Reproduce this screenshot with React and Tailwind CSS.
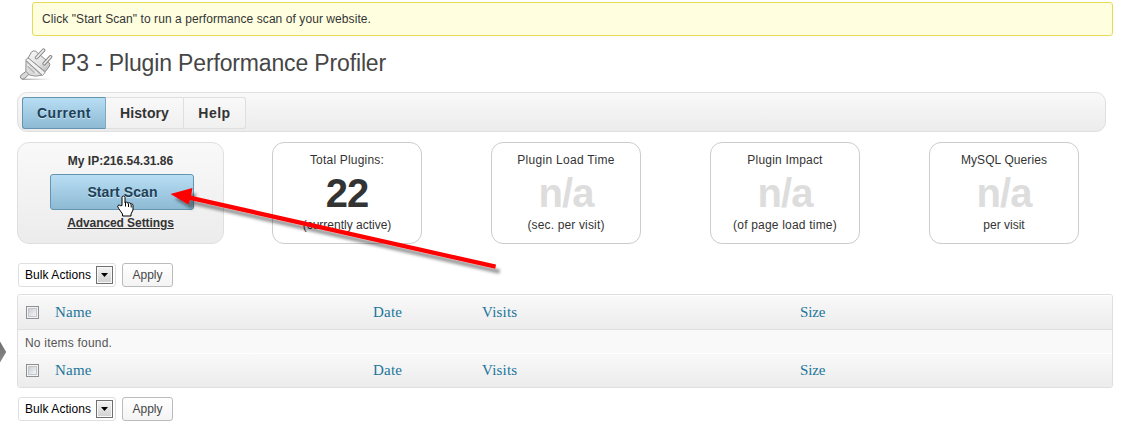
import React from "react";

function PlugIcon() {
  return (
    <svg width="34" height="34" viewBox="0 0 34 34" fill="none">
      <defs>
        <linearGradient id="metal" x1="8" y1="6" x2="24" y2="28" gradientUnits="userSpaceOnUse">
          <stop offset="0" stopColor="#f6f6f6" />
          <stop offset=".6" stopColor="#e2e2e2" />
          <stop offset="1" stopColor="#bdbdbd" />
        </linearGradient>
        <linearGradient id="floor" x1="5" y1="0" x2="32" y2="0" gradientUnits="userSpaceOnUse">
          <stop offset="0" stopColor="#8a8a8a" />
          <stop offset="1" stopColor="#8a8a8a" stopOpacity="0" />
        </linearGradient>
      </defs>
      <path d="M3 32.2H32" stroke="url(#floor)" strokeWidth="1" />
      <path d="M7.5 24 2.2 28Q.4 29.8 1.9 31.5 3.8 33 5.8 31.2L10.5 27Z" fill="#d8d8d8" stroke="#8a8a8a" />
      <path d="M9 11.2 12.4 5.2Q14.2 3 16.6 4.2L30 15.6Q31.6 17.4 30.2 19.4L26.2 24.8Z" fill="url(#metal)" stroke="#8a8a8a" />
      <path d="M6.6 13.2 8 11.4Q9 10.7 10 11.5L25.4 24.6Q26.2 25.6 25.3 26.6L23.4 28.4Z" fill="#f1f1f1" stroke="#8a8a8a" strokeWidth=".9" />
      <path d="M7 13.8 22.8 28.2 16.5 29.2 10.4 28 6.8 24.2Z" fill="#dcdcdc" stroke="#8a8a8a" strokeWidth=".9" />
      <path d="m9.3 18.8 6.6 6.6" stroke="#b3b3b3" strokeWidth="2.4" />
      <path d="m8.6 17.4 9 8.6" stroke="#fff" strokeWidth="1" />
      <path d="m17.6 10.6 7-7.4M25.2 16.8l6.4-7" stroke="#808080" strokeWidth="3.5" strokeLinecap="round" />
      <path d="m17.6 10.6 7-7.4M25.2 16.8l6.4-7" stroke="#ececec" strokeWidth="1.7" strokeLinecap="round" />
    </svg>
  );
}

function Stat({ title, value, note, muted, t = "", n = "" }) {
  return (
    <div className="flex h-[102px] w-[150px] flex-col items-center rounded-xl border border-[#ccc] bg-white pt-[9px] text-[12px] leading-4 whitespace-nowrap text-[#333]">
      <div className={t}>{title}</div>
      <div className={`mt-[5px] h-[40px] text-[40px] leading-[40px] font-bold tracking-[-1px] ${muted ? "text-[#ddd]" : "text-[#333]"}`}>{value}</div>
      <div className={`mt-[4px] ${n}`}>{note}</div>
    </div>
  );
}

function BulkBar() {
  return (
    <div className="ml-[18px] flex h-6 gap-[6px] text-[12px] whitespace-nowrap">
      <div className="flex h-6 w-[98px] items-center justify-between rounded-[3px] border border-[#dfdfdf] bg-white pr-[2px] pl-[6px] text-black">
        <span className="tracking-[0.06px]">Bulk Actions</span>
        <span className="flex h-[18px] w-[17px] items-center justify-center border border-[#707070] bg-linear-to-b from-[#f4f4f4] to-[#d0d0d0] shadow-[inset_0_0_0_1px_#f8f8f8]">
          <svg width="7" height="4" viewBox="0 0 7 4"><path d="M0 0h7L3.5 4Z" fill="#000" /></svg>
        </span>
      </div>
      <button className="h-6 w-[51px] rounded-[3px] border border-[#bbb] bg-linear-to-b from-white to-[#f4f4f4] text-center leading-[22px] text-[#464646]">Apply</button>
    </div>
  );
}

function ColumnRow() {
  return (
    <div className="grid h-[34px] grid-cols-[37px_318px_109px_318px_1fr] items-center border-t border-white bg-linear-to-b from-[#f9f9f9] to-[#ececec] pb-px font-['Liberation_Serif',serif] text-[15px] leading-5 tracking-[0.2px] text-[#21759b]">
      <span className="ml-[8px] flex h-[13px] w-[13px] items-center justify-center border border-[#8e8f8f] bg-[#f4f4f4]">
        <span className="h-[9px] w-[9px] border border-[#c3c7cd] bg-linear-to-br from-[#cbcfd5] to-[#f6f6f6]" />
      </span>
      <span>Name</span>
      <span>Date</span>
      <span>Visits</span>
      <span className="tracking-[-0.1px]">Size</span>
    </div>
  );
}

function Annotation() {
  return (
    <svg className="pointer-events-none absolute top-0 left-0" width="1122" height="433" viewBox="0 0 1122 433">
      <defs>
        <filter id="shade" x="-5%" y="-20%" width="115%" height="150%">
          <feDropShadow dx="4" dy="5" stdDeviation="1.8" floodColor="#000" floodOpacity=".4" />
        </filter>
        <linearGradient id="pointer" x1="0" y1="341" x2="0" y2="363" gradientUnits="userSpaceOnUse">
          <stop offset="0" stopColor="#6f6f6f" />
          <stop offset="1" stopColor="#8a8a8a" />
        </linearGradient>
      </defs>
      <path d="M170.5 194 192.4 188 191.2 195.8 496 264.6 495.3 268.8 190 200 188.4 204.5Z" fill="#f00" filter="url(#shade)" />
      <path
        d="M122 205.5v-8q0-1.5 1.5-1.5t1.5 1.5v5.5q.3-1 1.5-.9 1.3.1 1.4 1.3.4-.8 1.4-.7 1.3.2 1.4 1.5.3-.5 1.1-.4 1.2.3 1.2 1.7v4.5l-2 4v2h-8.5v-2l-3.8-5.5q-1.6-1.9-.6-3.1 1.1-.9 2.3.3Z"
        fill="#fff" stroke="#000" strokeWidth="1"
      />
      <path d="M125.5 202.5v4M128.5 203.5v3.5M131.2 204.5v3" stroke="#000" strokeWidth="1" />
      <path d="M0 341.5 6.2 352 0 362.5Z" fill="url(#pointer)" />
    </svg>
  );
}

export default function App() {
  return (
    <div className="relative h-[433px] w-[1122px] overflow-hidden bg-white pt-[2px] font-['Liberation_Sans',Arial,sans-serif]">
      <div className="ml-[32px] h-[34px] w-[1081px] rounded-[3px] border border-[#e6db55] bg-[#ffffe0] pl-[9px] text-[12px] leading-[32px] text-[#333]">
        <span className="tracking-[0.07px]">Click "Start Scan" to run a performance scan of your website.</span>
      </div>

      <header className="flex h-[56px] pt-[11px] pl-[19px]">
        <PlugIcon />
        <h1 className="ml-[8px] pt-px text-[23px] leading-[30px] font-normal tracking-[-0.15px] whitespace-nowrap text-[#464646]">P3 - Plugin Performance Profiler</h1>
      </header>

      <nav className="ml-[17px] flex h-[40px] w-[1089px] rounded-[10px] border border-[#dfdfdf] bg-linear-to-b from-[#f9f9f9] to-[#ececec] pt-[4px] pl-[4px] text-[14px] leading-[30px] font-bold text-[#333]">
        <div className="h-[32px] w-[84px] rounded-l-[3px] border border-[#6394b0] border-r-[#7fa9c2] bg-linear-to-b from-[#b8def4] to-[#8ebad4] text-center tracking-[0.5px] text-[#1d4158] [text-shadow:0_1px_0_#cfe6f3]">Current</div>
        <div className="h-[32px] w-[78px] border-y border-r border-[#dfdfdf] bg-linear-to-b from-[#f9f9f9] to-[#f0f0f0] text-center tracking-[0.1px]">History</div>
        <div className="h-[32px] w-[62px] rounded-r-[3px] border-y border-r border-[#dfdfdf] bg-linear-to-b from-[#f9f9f9] to-[#f0f0f0] text-center tracking-[0.5px]">Help</div>
      </nav>

      <section className="mt-[10px] ml-[17px] flex">
        <div className="mr-[48px] flex h-[102px] w-[207px] flex-col items-center rounded-xl border border-[#dfdfdf] bg-linear-to-b from-[#f9f9f9] to-[#ececec] pt-[10px] text-[12px] leading-4 font-bold text-[#333]">
          <div>My IP:216.54.31.86</div>
          <button className="mt-[5px] ml-[2px] h-[36px] w-[144px] rounded-[3px] border border-[#6394b0] bg-linear-to-b from-[#b8def4] to-[#8ebad4] pl-[2px] text-center text-[14px] leading-[34px] font-bold tracking-[0.1px] text-[#1d4158] [text-shadow:0_1px_0_#cfe6f3]">Start Scan</button>
          <a className="mt-[5px] tracking-[-0.08px] underline">Advanced Settings</a>
        </div>
        <div className="flex gap-[69px]">
          <Stat title="Total Plugins:" value="22" note="(currently active)" t="tracking-[0.2px]" />
          <Stat title="Plugin Load Time" value="n/a" note="(sec. per visit)" muted t="tracking-[0.3px]" n="tracking-[0.15px]" />
          <Stat title="Plugin Impact" value="n/a" note="(of page load time)" muted t="tracking-[0.2px]" n="tracking-[0.2px]" />
          <Stat title="MySQL Queries" value="n/a" note="per visit" muted t="tracking-[0.1px]" />
        </div>
      </section>

      <div className="mt-[19px]"><BulkBar /></div>

      <div className="mt-[7px] mb-[9px] ml-[17px] h-[94px] w-[1096px] overflow-hidden rounded-[3px] border border-[#dfdfdf] bg-[#f9f9f9]">
        <ColumnRow />
        <div className="h-[24px] border-t border-[#dfdfdf] pl-[7px] text-[12px] leading-[26px] tracking-[0.2px] text-[#555]">No items found.</div>
        <ColumnRow />
      </div>

      <BulkBar />
      <Annotation />
    </div>
  );
}
